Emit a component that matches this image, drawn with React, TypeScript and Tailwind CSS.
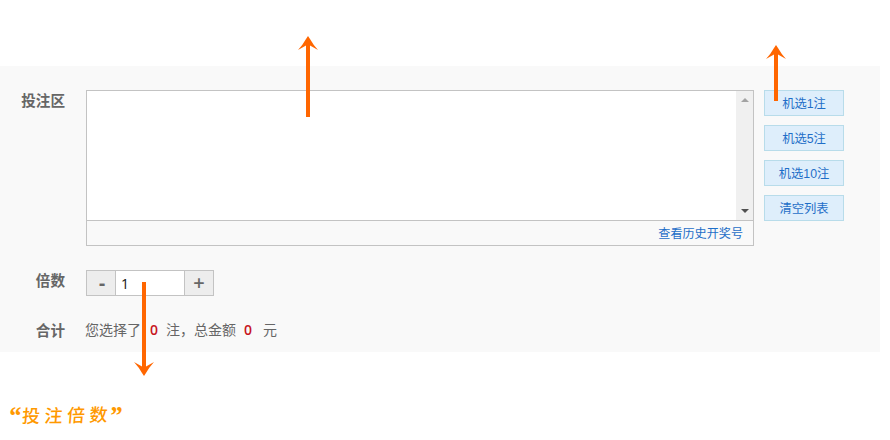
import React from "react";

const sans = "font-['Liberation_Sans','Noto_Sans_CJK_SC',sans-serif]";

function Arrow({ length, className }: { length: number; className: string }) {
  return (
    <svg className={`absolute ${className}`} width="20" height={length} viewBox={`0 0 20 ${length}`} fill="#ff6600">
      <path d={`M10 0 L12 3 Q15 8.500 20 14 L12 9.500 V${length} H8 V9.500 L0 14 Q5 8.500 8 3Z`} />
    </svg>
  );
}

function Label({ children }: { children: string }) {
  return (
    <div className="w-[65px] shrink-0 pt-px text-right text-[14.6px] leading-5 font-bold text-[#666]">{children}</div>
  );
}

function QuickPick({ children }: { children: string }) {
  return (
    <button className="flex h-[26px] w-20 items-center justify-center border border-[#b8dcea] bg-[#deeefb] pt-0.5 text-[12.3px] leading-none whitespace-nowrap text-[#1e6ec8]">
      {children}
    </button>
  );
}

export default function App() {
  return (
    <main className={`relative h-[440px] w-[890px] overflow-hidden bg-white pt-[66px] ${sans}`}>
      <section className="h-[286px] w-[880px] bg-[#f9f9f9] pt-6">
        <div className="flex">
          <Label>投注区</Label>
          <div className="ml-[21px] h-[156px] w-[668px] border border-[#c3c3c3]">
            <div className="flex h-[130px] justify-end border-b border-[#c3c3c3] bg-white">
              <div className="flex w-[17px] flex-col items-center justify-between bg-[#f0f0f0] pt-[7px] pb-[7px]">
                <svg width="8" height="4" viewBox="0 0 8 4" fill="#a3a3a3">
                  <path d="M4 0L8 4H0Z" />
                </svg>
                <svg width="8" height="4" viewBox="0 0 8 4" fill="#505050">
                  <path d="M0 0H8L4 4Z" />
                </svg>
              </div>
            </div>
            <div className="flex h-6 items-center justify-end pt-0.5 pr-[10px] text-[12.1px] text-[#1e6ec8]">
              <a>查看历史开奖号</a>
            </div>
          </div>
          <div className="ml-[10px] flex flex-col gap-[9px]">
            <QuickPick>机选1注</QuickPick>
            <QuickPick>机选5注</QuickPick>
            <QuickPick>机选10注</QuickPick>
            <QuickPick>清空列表</QuickPick>
          </div>
        </div>
        <div className="mt-6 flex">
          <Label>倍数</Label>
          <div className="ml-[21px] flex h-[26px] w-32 border border-[#c3c3c3] text-[#666]">
            <button className="flex w-7 items-center justify-center bg-[#ededed] pl-0.5 text-[20px] leading-none font-bold">-</button>
            <div className="flex w-[70px] items-center border-x border-[#c3c3c3] bg-white pl-[5px] font-['Open_Sans',sans-serif] text-[14px] text-[#111]">1</div>
            <button className="flex w-7 items-center justify-center bg-[#ededed] font-['Open_Sans',sans-serif] text-[20px] leading-none font-semibold">+</button>
          </div>
        </div>
        <div className="mt-6 flex">
          <Label>合计</Label>
          <div className="ml-5 flex text-[14px] leading-5 whitespace-nowrap text-[#666]">
            <span className="w-16">您选择了</span>
            <b className="w-[17px] pl-px font-['Open_Sans',sans-serif] font-semibold text-[#c7161d]">0</b>
            <span className="w-[78px]">注，总金额</span>
            <b className="w-[19px] font-['Open_Sans',sans-serif] font-semibold text-[#c7161d]">0</b>
            <span>元</span>
          </div>
        </div>
      </section>
      <p className="mt-[52px] ml-[8px] flex h-6 items-center font-['Liberation_Serif','Noto_Sans_CJK_SC',serif] text-[18px] leading-6 font-medium text-[#ff9900]">
        <span className="w-[14px] text-[26px] font-bold italic">“</span>
        <span className="inline-block w-[87px] -skew-x-6 -rotate-1 tracking-[4.500px] whitespace-nowrap">投注倍数</span>
        <span className="text-[26px] font-bold italic">”</span>
      </p>
      <Arrow length={81} className="top-9 left-[298px]" />
      <Arrow length={56} className="top-[45px] left-[766px]" />
      <Arrow length={94} className="top-[282px] left-[134px] rotate-180" />
    </main>
  );
}
